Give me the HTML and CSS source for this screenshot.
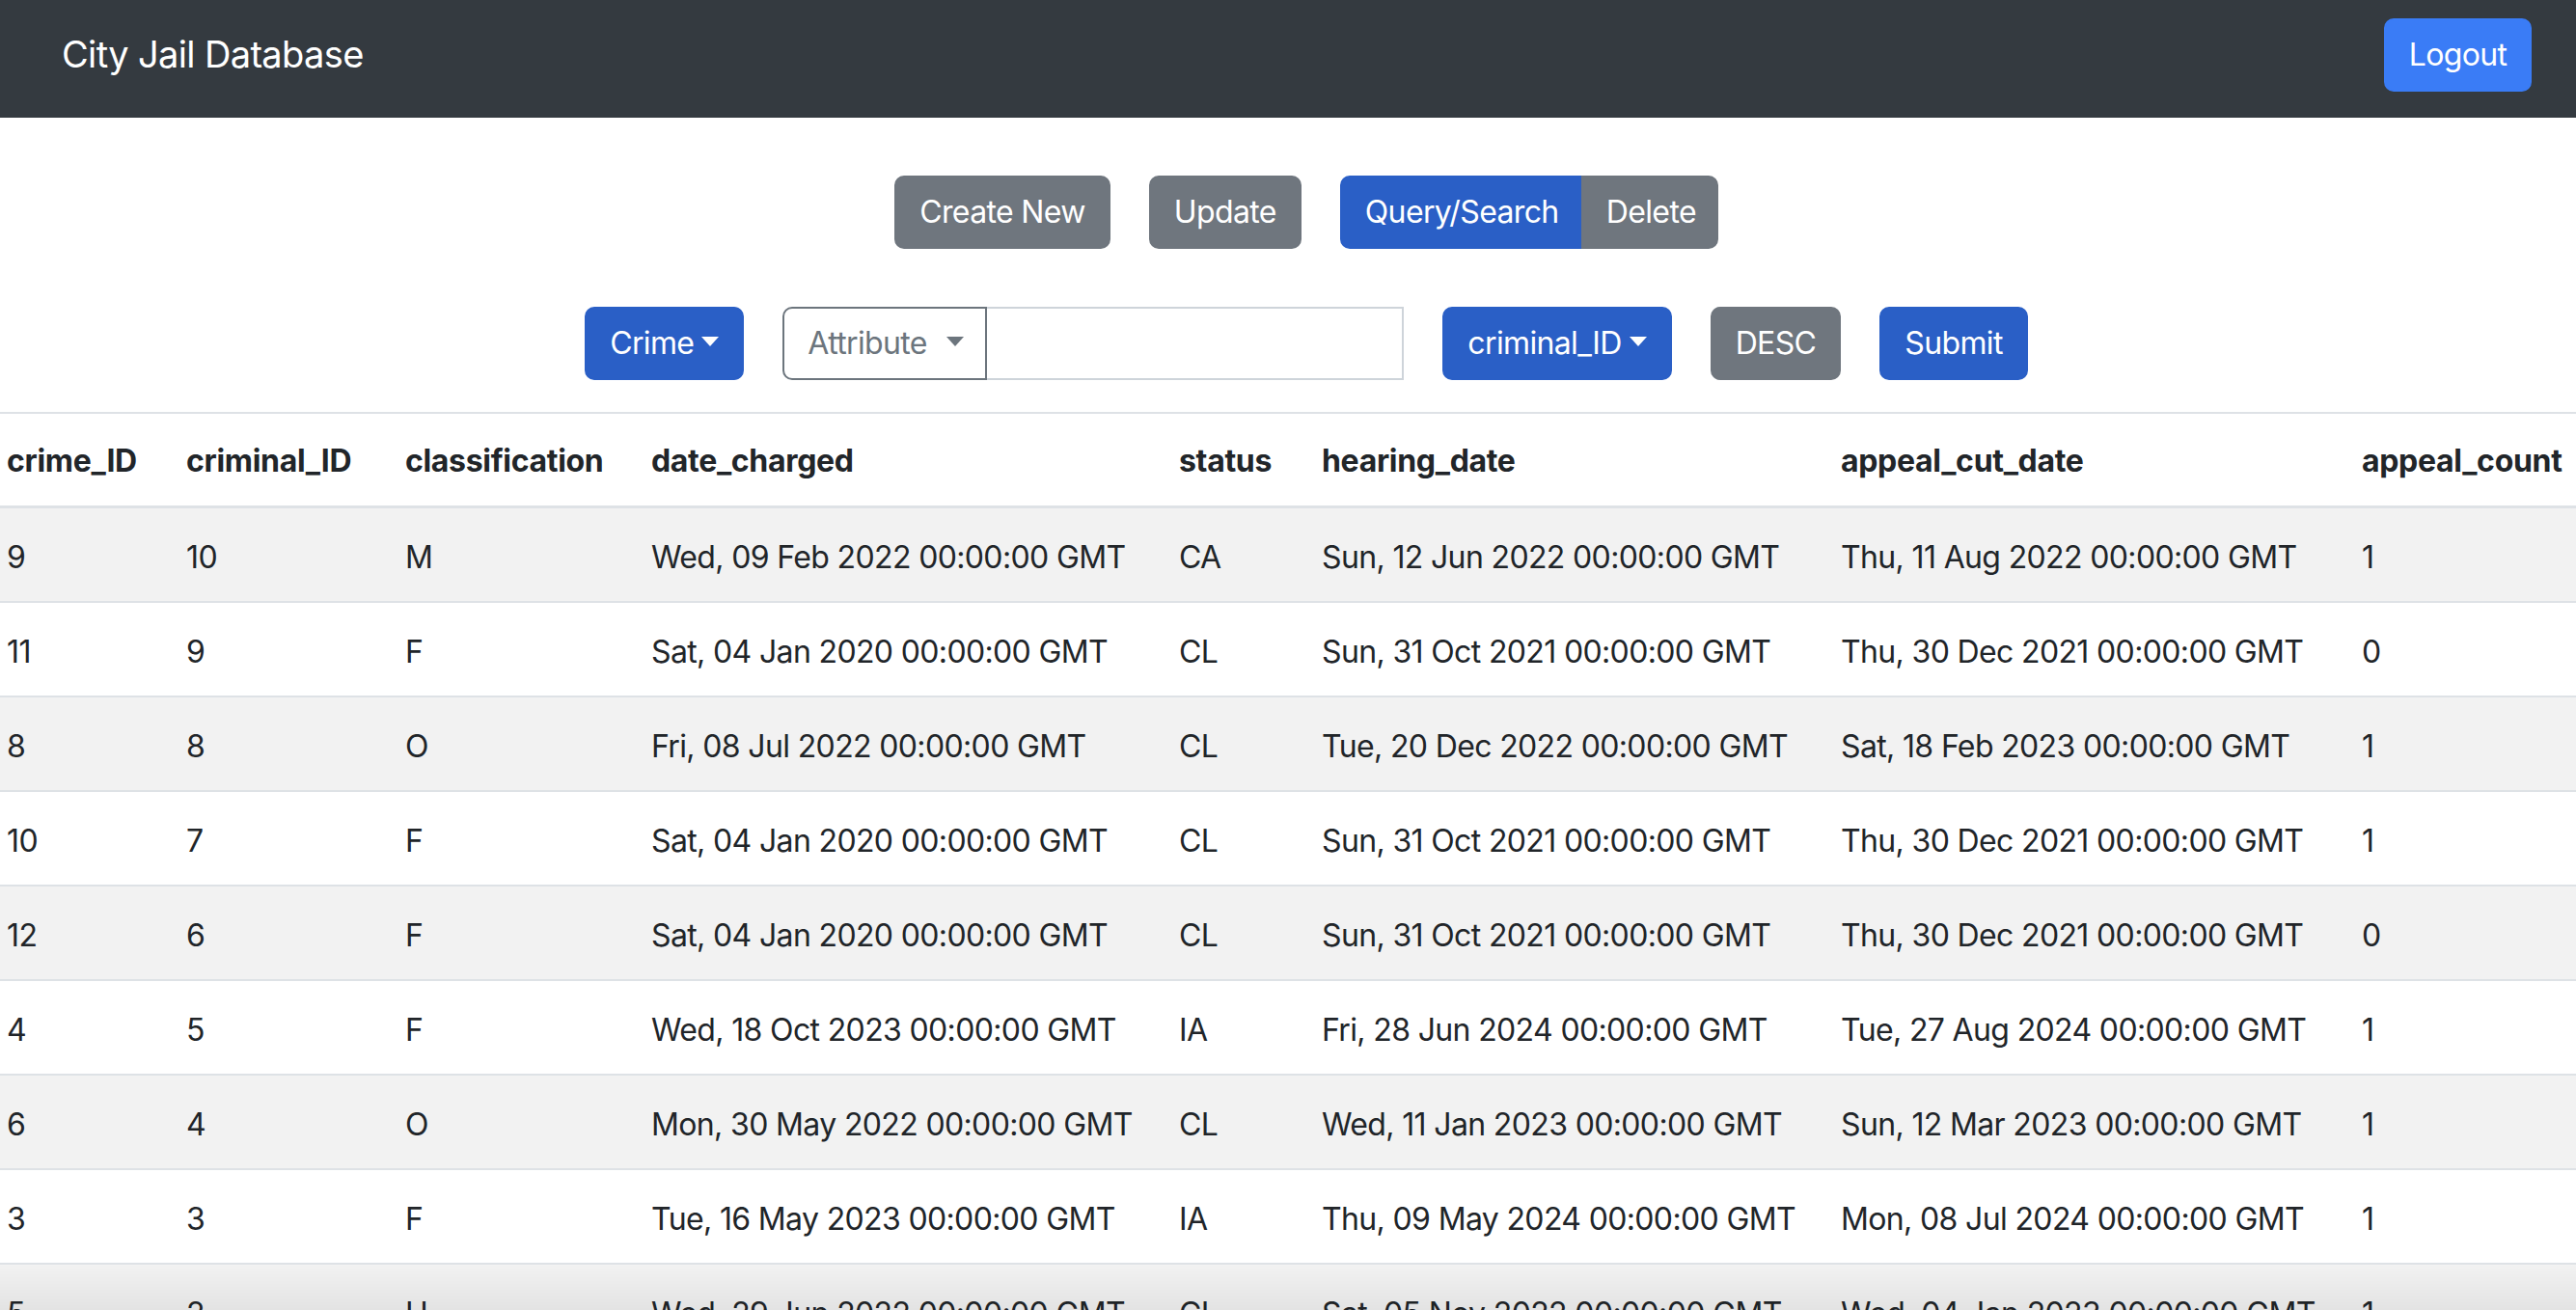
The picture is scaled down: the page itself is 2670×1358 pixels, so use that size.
FILE: index.html
```html
<!DOCTYPE html>
<html lang="en">
<head>
<meta charset="utf-8">
<title>City Jail Database</title>
<link rel="stylesheet" href="styles.css">
</head>
<body>
<nav class="navbar">
  <span class="brand">City Jail Database</span>
  <button class="btn btn-logout">Logout</button>
</nav>

<div class="toolbar toolbar-top">
  <button class="btn btn-secondary">Create New</button>
  <button class="btn btn-secondary">Update</button>
  <div class="btn-group">
    <button class="btn btn-primary group-first">Query/Search</button>
    <button class="btn btn-secondary group-last">Delete</button>
  </div>
</div>

<div class="toolbar toolbar-query">
  <button class="btn btn-primary caret">Crime</button>
  <div class="input-group">
    <button class="btn btn-outline caret spaced">Attribute</button>
    <input class="text-input" type="text">
  </div>
  <button class="btn btn-primary caret">criminal_ID</button>
  <button class="btn btn-secondary">DESC</button>
  <button class="btn btn-primary">Submit</button>
</div>

<table class="data-table">
  <colgroup>
    <col class="c1"><col class="c2"><col class="c3"><col class="c4">
    <col class="c5"><col class="c6"><col class="c7"><col class="c8">
  </colgroup>
  <thead>
    <tr>
      <th>crime_ID</th><th>criminal_ID</th><th>classification</th><th>date_charged</th>
      <th>status</th><th>hearing_date</th><th>appeal_cut_date</th><th>appeal_count</th>
    </tr>
  </thead>
  <tbody>
    <tr><td>9</td><td>10</td><td>M</td><td>Wed, 09 Feb 2022 00:00:00 GMT</td><td>CA</td><td>Sun, 12 Jun 2022 00:00:00 GMT</td><td>Thu, 11 Aug 2022 00:00:00 GMT</td><td>1</td></tr>
    <tr><td>11</td><td>9</td><td>F</td><td>Sat, 04 Jan 2020 00:00:00 GMT</td><td>CL</td><td>Sun, 31 Oct 2021 00:00:00 GMT</td><td>Thu, 30 Dec 2021 00:00:00 GMT</td><td>0</td></tr>
    <tr><td>8</td><td>8</td><td>O</td><td>Fri, 08 Jul 2022 00:00:00 GMT</td><td>CL</td><td>Tue, 20 Dec 2022 00:00:00 GMT</td><td>Sat, 18 Feb 2023 00:00:00 GMT</td><td>1</td></tr>
    <tr><td>10</td><td>7</td><td>F</td><td>Sat, 04 Jan 2020 00:00:00 GMT</td><td>CL</td><td>Sun, 31 Oct 2021 00:00:00 GMT</td><td>Thu, 30 Dec 2021 00:00:00 GMT</td><td>1</td></tr>
    <tr><td>12</td><td>6</td><td>F</td><td>Sat, 04 Jan 2020 00:00:00 GMT</td><td>CL</td><td>Sun, 31 Oct 2021 00:00:00 GMT</td><td>Thu, 30 Dec 2021 00:00:00 GMT</td><td>0</td></tr>
    <tr><td>4</td><td>5</td><td>F</td><td>Wed, 18 Oct 2023 00:00:00 GMT</td><td>IA</td><td>Fri, 28 Jun 2024 00:00:00 GMT</td><td>Tue, 27 Aug 2024 00:00:00 GMT</td><td>1</td></tr>
    <tr><td>6</td><td>4</td><td>O</td><td>Mon, 30 May 2022 00:00:00 GMT</td><td>CL</td><td>Wed, 11 Jan 2023 00:00:00 GMT</td><td>Sun, 12 Mar 2023 00:00:00 GMT</td><td>1</td></tr>
    <tr><td>3</td><td>3</td><td>F</td><td>Tue, 16 May 2023 00:00:00 GMT</td><td>IA</td><td>Thu, 09 May 2024 00:00:00 GMT</td><td>Mon, 08 Jul 2024 00:00:00 GMT</td><td>1</td></tr>
    <tr><td>5</td><td>2</td><td>H</td><td>Wed, 29 Jun 2022 00:00:00 GMT</td><td>CL</td><td>Sat, 05 Nov 2022 00:00:00 GMT</td><td>Wed, 04 Jan 2023 00:00:00 GMT</td><td>1</td></tr>
  </tbody>
</table>

<div class="bottom-shade"></div>
</body>
</html>
```

FILE: styles.css
```css
html, body {
  margin: 0;
  padding: 0;
  background: #ffffff;
}

body {
  font-family: Inter, "Liberation Sans", Arial, sans-serif;
  font-size: 32px;
  line-height: 1.5;
  letter-spacing: -0.02em;
  color: #212529;
  overflow: hidden;
}

.navbar {
  height: 122px;
  background: #343a40;
  display: flex;
  align-items: center;
  justify-content: space-between;
  padding: 0 46px 8px 64px;
  box-sizing: border-box;
}

.brand {
  color: #ffffff;
  font-size: 38px;
  line-height: 1.5;
  margin-bottom: 2px;
}

.btn {
  font-family: inherit;
  font-size: 32px;
  letter-spacing: inherit;
  line-height: 48px;
  padding: 12px 24px;
  border: 2px solid transparent;
  border-radius: 10px;
  color: #ffffff;
  cursor: pointer;
  box-sizing: border-box;
  height: 76px;
  white-space: nowrap;
}

.btn-logout {
  background: #3a7cf6;
  border-color: #3a7cf6;
  width: 153px;
  padding: 12px 0;
}

.btn-primary {
  background: #2a5fc6;
  border-color: #2a5fc6;
}

.btn-secondary {
  background: #6f767e;
  border-color: #6f767e;
}

.btn-outline {
  background: #ffffff;
  color: #6c757d;
  border-color: #6c757d;
}

.toolbar {
  display: flex;
  justify-content: center;
  align-items: center;
  gap: 40px;
  padding-left: 38px;
}

.toolbar-top {
  margin-top: 60px;
}

.toolbar-query {
  margin-top: 60px;
  margin-bottom: 33px;
}

.btn-group {
  display: flex;
}

.group-first {
  border-top-right-radius: 0;
  border-bottom-right-radius: 0;
  width: 250px;
}

.group-last {
  border-top-left-radius: 0;
  border-bottom-left-radius: 0;
  width: 142px;
}

.caret::after {
  content: "";
  display: inline-block;
  margin-left: 8px;
  vertical-align: 8px;
  border-top: 10px solid;
  border-right: 9px solid transparent;
  border-left: 9px solid transparent;
  border-bottom: 0;
}

.caret.spaced::after {
  margin-left: 20px;
}

.input-group {
  display: flex;
  height: 76px;
}

.input-group .btn-outline {
  border-top-right-radius: 0;
  border-bottom-right-radius: 0;
  width: 212px;
  padding: 12px 0 12px 24px;
  text-align: left;
}

.text-input {
  width: 432px;
  height: 76px;
  box-sizing: border-box;
  border: 2px solid #ced4da;
  border-left: 0;
  border-radius: 0;
  font-family: inherit;
  font-size: 32px;
  padding: 12px 24px;
  background: #ffffff;
}

.data-table {
  width: 2670px;
  table-layout: fixed;
  border-collapse: collapse;
  border-top: 2px solid #dee2e6;
}

.c1 { width: 186px; }
.c2 { width: 227px; }
.c3 { width: 255px; }
.c4 { width: 547px; }
.c5 { width: 148px; }
.c6 { width: 538px; }
.c7 { width: 540px; }
.c8 { width: 229px; }

.data-table th,
.data-table td {
  text-align: left;
  padding: 27px 0 21px 7px;
  line-height: 48px;
  white-space: nowrap;
  overflow: visible;
  border-bottom: 2px solid #dee2e6;
}

.data-table th {
  font-weight: 700;
  letter-spacing: -0.01em;
  padding-top: 25px;
  padding-bottom: 22px;
  border-bottom-width: 3px;
}

.data-table tbody tr:nth-child(odd) td {
  background: #f2f2f2;
}

.bottom-shade {
  position: fixed;
  left: 0;
  right: 0;
  bottom: 0;
  height: 48px;
  background: linear-gradient(to bottom, rgba(0, 0, 0, 0), rgba(0, 0, 0, 0.06));
  pointer-events: none;
}
```
